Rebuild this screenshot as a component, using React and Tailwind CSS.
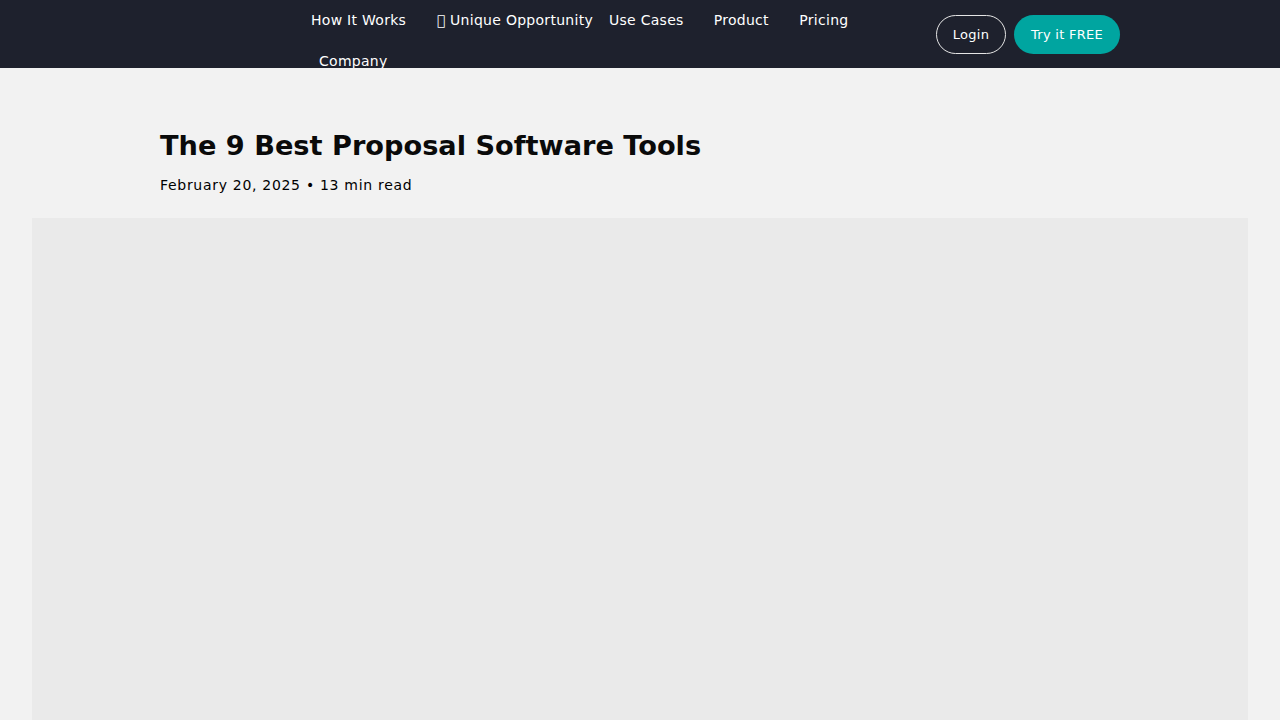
export default function App() {
  return (
    <div className="h-[720px] overflow-hidden bg-[#f2f2f2] font-['DejaVu_Sans',sans-serif]">
      <header className="h-[68px] overflow-hidden bg-[#1e212d] flex items-start">
        <nav className="ml-[296px] w-[570px] flex flex-wrap text-[14px] leading-[20px] tracking-[0.28px] text-white">
          <a className="px-[15px] pt-[10px] pb-[11px]">How It Works</a>
          <a className="pl-[15.5px] pr-[16px] pt-[10px] pb-[11px]"><span>{"\uE000"}</span> Unique Opportunity</a>
          <a className="pr-[15px] pt-[10px] pb-[11px]">Use Cases</a>
          <a className="px-[15px] pt-[10px] pb-[11px]">Product</a>
          <a className="pl-[15.5px] pr-[14.5px] pt-[10px] pb-[11px]">Pricing</a>
          <a className="w-full pl-[23px] pt-[10px] pb-[11px]">Company</a>
        </nav>
        <div className="ml-[70px] mt-[15px] flex gap-2 text-[13px] leading-[20px] tracking-[0.26px] text-white">
          <a className="h-[39px] w-[70px] rounded-full border border-[#e5e5e5] flex items-center justify-center">Login</a>
          <a className="h-[39px] w-[106px] rounded-full bg-[#00a5a0] flex items-center justify-center">Try it FREE</a>
        </div>
      </header>
      <main className="px-[32px]">
        <div className="px-[128px] pt-[60px]">
          <h1 className="text-[27.2px] leading-[36px] font-bold text-[#0a0a0a]">The 9 Best Proposal Software Tools</h1>
          <p className="mt-[11px] text-[14px] leading-[20px] tracking-[0.7px] text-black">February 20, 2025 • 13 min read</p>
        </div>
        <div className="mt-[23px] h-[600px] bg-[#eaeaea]" />
      </main>
    </div>
  );
}
